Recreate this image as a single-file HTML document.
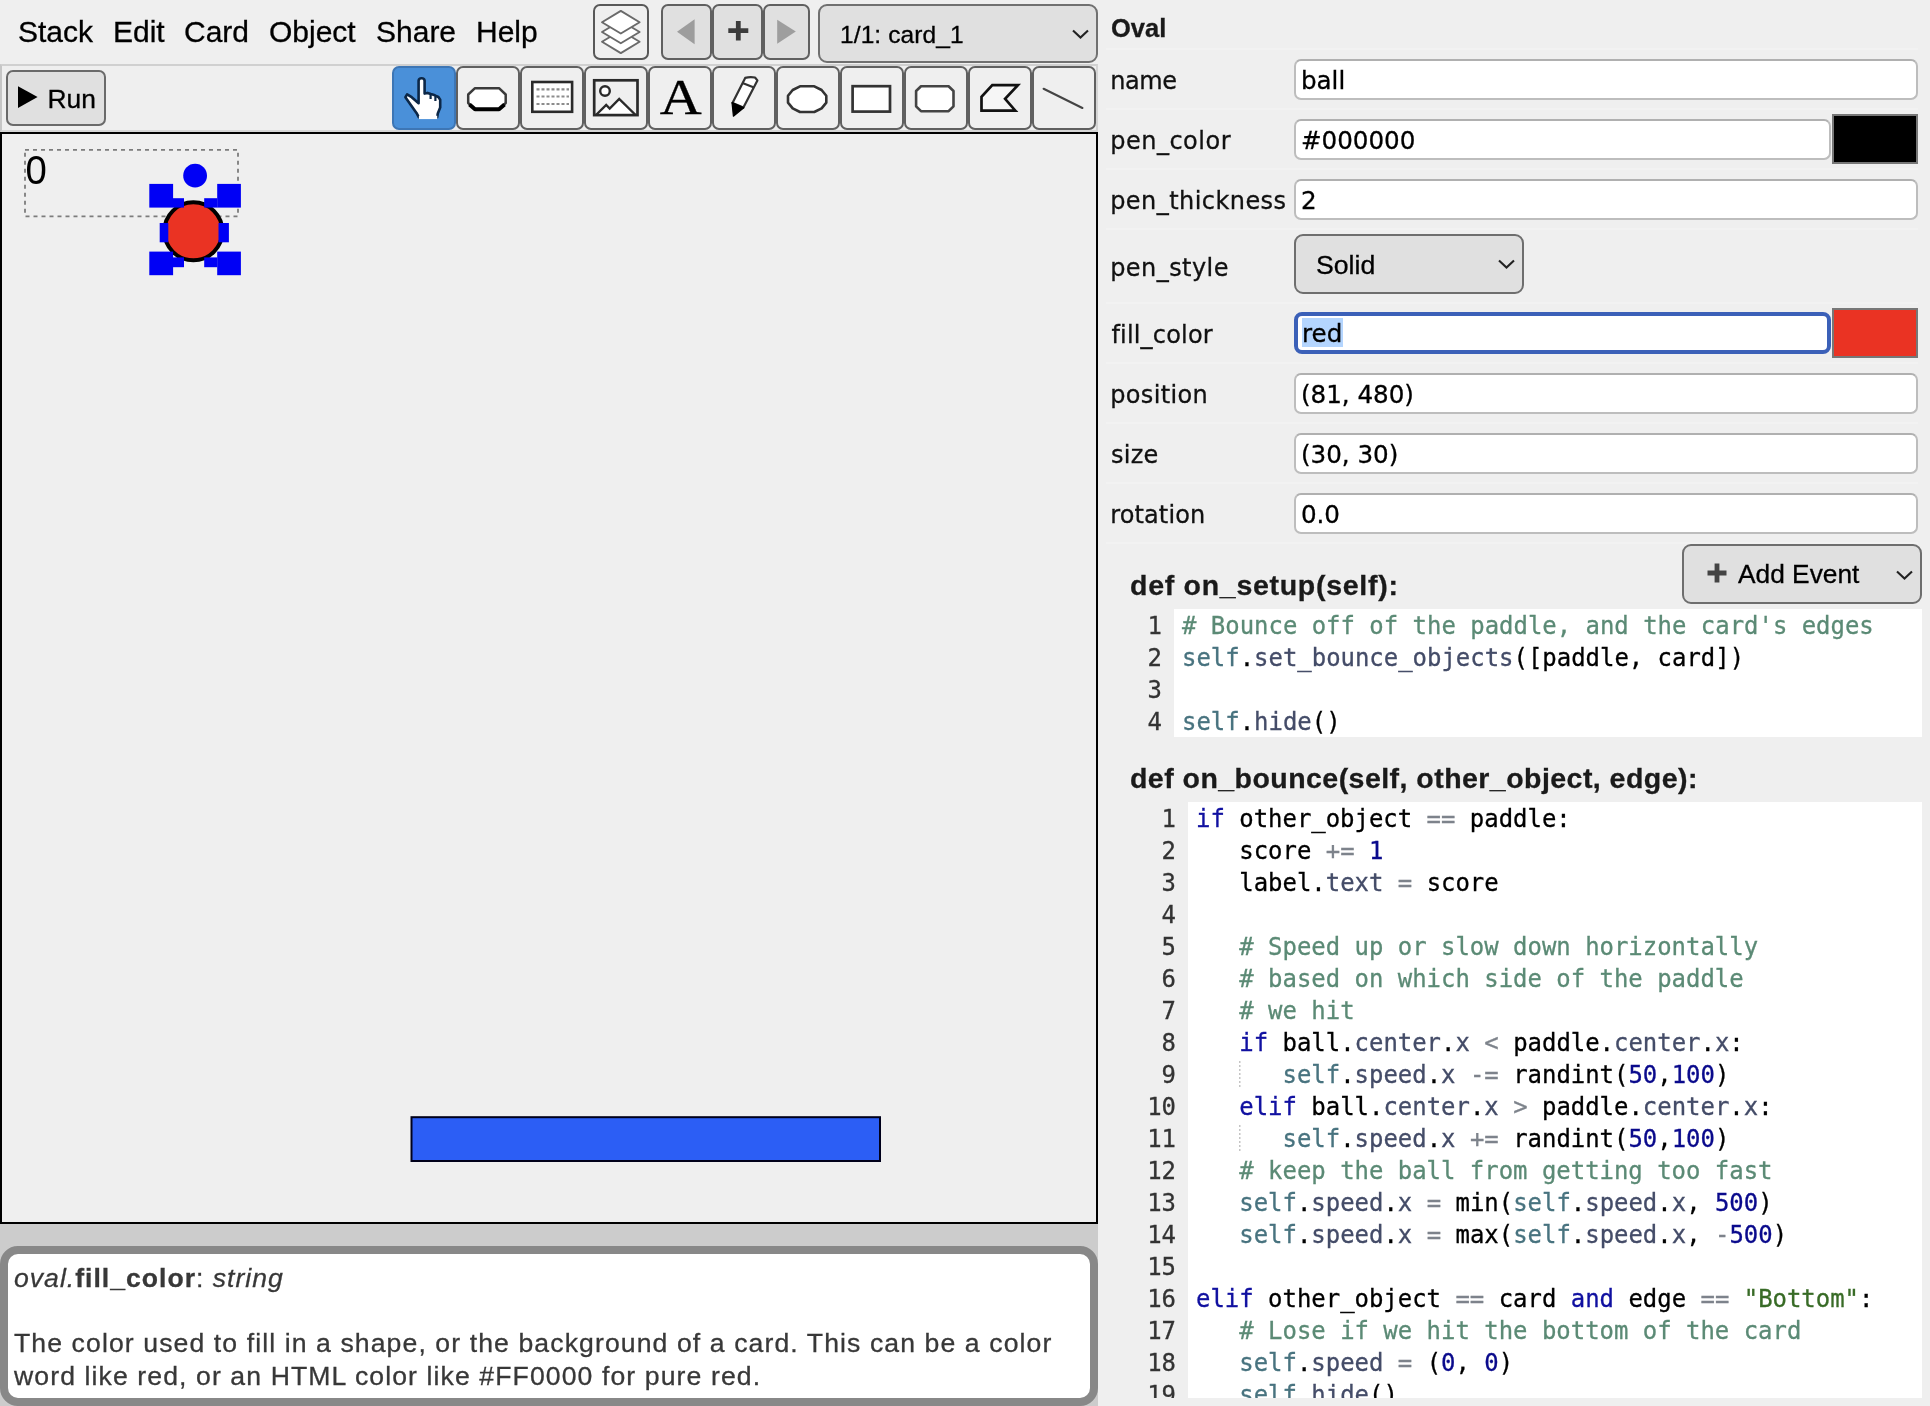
<!DOCTYPE html>
<html lang="en">
<head>
<meta charset="utf-8">
<title>CardStock</title>
<style>
*{box-sizing:border-box;margin:0;padding:0}
html,body{width:1930px;height:1406px;overflow:hidden;background:#efefef}
body{will-change:transform;-webkit-text-stroke-width:0.3px;position:relative;font-family:"Liberation Sans",sans-serif;color:#000}
.abs{position:absolute}
/* left column */
#menubar{position:absolute;left:0;top:0;width:1098px;height:64px;background:#efefef}
.mi{position:absolute;top:15px;font-size:30px;line-height:34px;white-space:nowrap}
#toolbar{position:absolute;left:0;top:64px;width:1098px;height:68px;background:#efefef;border:2px solid;border-color:#d0d0d0 #d4d4d4 #d6d6d6 #c6c6c6}
.btn{position:absolute;border:2px solid #606060;border-radius:7px;background:#e0e0e0}
.tool{position:absolute;top:66px;width:64px;height:64px;border:2px solid #606060;border-radius:7px;background:#efefef}
.tool svg{position:absolute;left:0;top:0;width:60px;height:60px}
#canvas{position:absolute;left:0;top:132px;width:1098px;height:1092px;border:2px solid #000;background:#efefef}
#below{position:absolute;left:0;top:1224px;width:1098px;height:182px;background:#cccccc}
#help{position:absolute;left:0;top:1246px;width:1098px;height:160px;border:8px solid #888;border-radius:18px;background:#fff;color:#383838;font-size:26.6px;line-height:33.2px;letter-spacing:1.1px}
/* right column */
#panel{position:absolute;left:1098px;top:0;width:832px;height:1406px;background:#efefef}
.lbl{position:absolute;left:1110px;font-family:"DejaVu Sans","Liberation Sans",sans-serif;font-size:24px;line-height:30px;white-space:nowrap;color:#111}
.inp{position:absolute;left:1294px;width:624px;height:41px;border:2px solid #bdbdbd;border-top-color:#b0b0b0;border-radius:7px;background:#fff;font-family:"DejaVu Sans","Liberation Sans",sans-serif;font-size:24.6px;line-height:39.2px;padding-left:4.9px;white-space:nowrap;color:#000}
.sel{position:absolute;border:2px solid #6e6e6e;border-radius:9px;background:#e0e0e0;font-size:26.67px;white-space:nowrap}
.sw{position:absolute;left:1832px;width:86px;height:50px;border:2px solid #777}
.hd{position:absolute;left:1130px;font-weight:bold;font-size:28.5px;line-height:34px;white-space:nowrap;color:#1a1a1a}
.ed{position:absolute;left:1110px;width:812px;background:#fff;overflow:hidden}
.gut{position:absolute;left:0;top:0;bottom:0;background:#efefef}
.code,.nums{position:absolute;top:0.5px;font-family:"DejaVu Sans Mono","Liberation Mono",monospace;font-size:23.95px;line-height:32px;white-space:pre}
.nums{text-align:right;color:#333}
.ig{background:repeating-linear-gradient(to bottom,#c4c4c4 0,#c4c4c4 2px,transparent 2px,transparent 4px) -0.5px 0/2px 100% no-repeat}
.c{color:#5b8a75}.k{color:#1010a0}.n{color:#0a0a8c}.s{color:#386b26}.v{color:#48737f}.f{color:#444c68}.o{color:#7d838b}
</style>
</head>
<body>
<div id="menubar">
<span class="mi" style="left:18px">Stack</span>
<span class="mi" style="left:113px">Edit</span>
<span class="mi" style="left:184px">Card</span>
<span class="mi" style="left:269px">Object</span>
<span class="mi" style="left:376px">Share</span>
<span class="mi" style="left:476px">Help</span>
</div>
<div id="toolbar"></div>

<!-- top-right controls -->
<div class="btn" style="left:593px;top:4px;width:56px;height:56px;background:#efefef;border-color:#585858">
<svg width="52" height="52" viewBox="2 2 52 52" style="position:absolute;left:0;top:0">
<g fill="#fff" stroke="#6a6a6a" stroke-width="1.9" stroke-linejoin="round">
<path d="M9 37.8 L27.8 26.5 L46.6 37.8 L27.8 49.1 Z"/>
<path d="M9 28 L27.8 16.7 L46.6 28 L27.8 39.3 Z"/>
<path d="M9 18.2 L27.8 6.9 L46.6 18.2 L27.8 29.5 Z"/>
</g></svg></div>
<div class="btn" style="left:661px;top:4px;width:51px;height:56px"><svg width="47" height="52" viewBox="2 2 47 52" style="position:absolute;left:0;top:0"><path d="M16 27.7 L33.6 15.3 L33.6 40.2 Z" fill="#9d9d9d"/></svg></div>
<div class="btn" style="left:712px;top:4px;width:51px;height:56px"><svg width="47" height="52" viewBox="1 2 47 52" style="position:absolute;left:0;top:0"><path d="M15.3 26.7 H35.3 M25.3 16.9 V36.5" stroke="#3c3c3c" stroke-width="4.8" fill="none"/></svg></div>
<div class="btn" style="left:763px;top:4px;width:47px;height:56px"><svg width="43" height="52" viewBox="1 2 43 52" style="position:absolute;left:0;top:0"><path d="M13.2 15.7 L13.2 39.7 L31.8 27.5 Z" fill="#9e9e9e"/></svg></div>
<div class="sel" style="left:818px;top:4px;width:280px;height:59px;font-size:24.5px;line-height:55px;padding-left:20px;border-color:#707070;letter-spacing:0.1px"><span style="position:relative;top:1px">1/1: card_1</span>
<svg width="24" height="16" viewBox="0 0 24 16" style="position:absolute;left:249.2px;top:21.2px"><path d="M4 3.5 L11.5 10.5 L19 3.5" fill="none" stroke="#222" stroke-width="2.1"/></svg></div>

<!-- run button -->
<div class="btn" style="left:6px;top:70px;width:100px;height:56px;border-color:#6a6a6a"><svg width="24" height="28" viewBox="0 0 24 28" style="position:absolute;left:9.9px;top:13px"><path d="M0 1.3 L19.6 12.1 L0 23 Z" fill="#000"/></svg><span style="position:absolute;left:39.5px;top:10px;font-size:26.4px;line-height:34px">Run</span></div>

<!-- tools -->
<div class="tool" style="left:392px;background:#4a90d9;border-color:#3d76b5">
<svg viewBox="2 2 60 60"><path d="M26.9 51.3 L25 47.8 L19 39.3 L13.4 31.2 L15.1 28.3 L19.7 31.2 L26.6 37.2 L26.6 14.6 Q26.8 12.2 29.6 12.2 Q32.4 12.2 32.6 14.6 L32.6 27.6 L35.6 26.9 L38.8 28 L41.4 28.7 L44 30 L46.4 31 L48.2 33.8 L48.2 41.6 L45.8 47.4 L45.2 51.3 Z" fill="#fff" stroke="#0c2747" stroke-width="2.6" stroke-linejoin="round"/>
<path d="M26.9 51.4 H45.2" stroke="#fff" stroke-width="3.4"/>
<path d="M38.6 28.5 V33 M43.4 30.5 V35" stroke="#0c2747" stroke-width="2.2"/></svg></div>
<div class="tool" style="left:456px"><svg viewBox="1 2 60 60"><path d="M18 22.2 H42 L48.7 28.5 V37 L42 43.3 H18 L11.2 37 V28.5 Z" fill="#fff" stroke="#3a3a3a" stroke-width="2.5" stroke-linejoin="round"/><path d="M12.5 38.5 L18 43.3 H42 L47.5 38.5" fill="none" stroke="#000" stroke-width="4" stroke-linejoin="round"/></svg></div>
<div class="tool" style="left:520px"><svg viewBox="1 2 60 60"><rect x="11.3" y="16" width="39.8" height="29.8" fill="#fff" stroke="#2a2a2a" stroke-width="2.6"/><path d="M15.5 23.3 H48 M15.5 30.5 H48 M15.5 38 H48" stroke="#8c8c8c" stroke-width="2.2" stroke-dasharray="3 2"/></svg></div>
<div class="tool" style="left:584px"><svg viewBox="1 2 60 60"><path d="M11.5 48.8 L21.2 39 L24.7 42.5 L34.2 32.9 L50.2 48.8 Z" fill="#fff"/><rect x="9.2" y="14.3" width="43.3" height="34.8" fill="none" stroke="#2a2a2a" stroke-width="2.7"/><circle cx="20" cy="25" r="4.8" fill="#fff" stroke="#2a2a2a" stroke-width="2.4"/><path d="M11 49 L21.2 39 L24.7 42.5 L34.2 32.9 L50.6 49" fill="none" stroke="#2a2a2a" stroke-width="2.4" stroke-linejoin="miter"/></svg></div>
<div class="tool" style="left:648px"><span style="position:absolute;left:0;top:0;width:60px;height:60px;text-align:center;font-family:'Liberation Serif',serif;font-size:51px;line-height:60px;transform:translate(0.7px,-0.9px) scaleX(1.14);display:block;color:#000">A</span></div>
<div class="tool" style="left:712px"><svg viewBox="1 2 60 60"><path d="M19.5 37 L32.2 11.9 Q37 10.4 42 11.5 L44.4 14.4 L30.4 41.5 Z" fill="#fff" stroke="#333" stroke-width="2.2" stroke-linejoin="round"/><path d="M30.1 17.2 L41 21.6" stroke="#333" stroke-width="2.2"/><path d="M19 36.5 L30.8 41.7 L20.4 50.2 Z" fill="#000" stroke="#000" stroke-width="1.2" stroke-linejoin="round"/></svg></div>
<div class="tool" style="left:776px"><svg viewBox="1 2 60 60"><path d="M23 20.3 H37.3 L44.6 24 L49.3 29.8 V36.6 L44.6 42.4 L37.3 46 H23 L15.7 42.4 L11 36.6 V29.8 L15.7 24 Z" fill="#fff" stroke="#333" stroke-width="2.6" stroke-linejoin="round"/></svg></div>
<div class="tool" style="left:840px"><svg viewBox="1 2 60 60"><rect x="11.6" y="20.2" width="37.4" height="25.4" fill="#fff" stroke="#333" stroke-width="2.7"/></svg></div>
<div class="tool" style="left:904px"><svg viewBox="1 2 60 60"><path d="M16 20.2 H43.6 L48.5 25 V40.3 L43.6 45.2 H16 L11.1 40.3 V25 Z" fill="#fff" stroke="#444" stroke-width="2.6" stroke-linejoin="round"/></svg></div>
<div class="tool" style="left:968px"><svg viewBox="1 2 60 60"><path d="M23.3 19.2 H48.9 L36.1 32.9 L46.4 44.7 H12.5 V30.8 Z" fill="#f6f6f6" stroke="#111" stroke-width="2.7" stroke-linejoin="miter"/></svg></div>
<div class="tool" style="left:1032px"><svg viewBox="1 2 60 60"><path d="M10.6 22.8 L49.4 42" stroke="#444" stroke-width="2.1" stroke-linecap="round"/></svg></div>
<div id="canvas">
<svg width="1094" height="1088" viewBox="2 134 1094 1088" style="position:absolute;left:0;top:0">
<rect x="25" y="149.8" width="213" height="66.5" fill="none" stroke="#7c7c7c" stroke-width="1.8" stroke-dasharray="4 4"/>
<text transform="translate(25.4 183.7) scale(0.93 1)" font-family="Liberation Sans, sans-serif" font-size="41.2" fill="#000">0</text>
<circle cx="193.35" cy="231.35" r="29" fill="#ea3323" stroke="#000" stroke-width="4"/>
<g fill="#0000f5">
<circle cx="195.1" cy="175.7" r="11.9"/>
<rect x="149.3" y="183.9" width="23.8" height="23.7"/>
<rect x="173" y="198.2" width="11" height="9.4"/>
<rect x="217.2" y="183.9" width="23.7" height="23.7"/>
<rect x="204.2" y="198.2" width="13.1" height="9.4"/>
<rect x="149.3" y="251.6" width="23.8" height="23.6"/>
<rect x="173" y="257.4" width="11" height="9.8"/>
<rect x="217.2" y="251.6" width="23.7" height="23.6"/>
<rect x="204.2" y="257.4" width="13.1" height="9.8"/>
<rect x="159.7" y="223" width="8.6" height="19.3"/>
<rect x="218.5" y="223" width="10.4" height="19.3"/>
</g>
<rect x="411.5" y="1117.2" width="468.5" height="43.8" fill="#2c5ef5" stroke="#00001a" stroke-width="2"/>
</svg>
</div>
<div id="below"></div>
<div id="help"><div style="position:absolute;left:6px;top:7.5px;white-space:nowrap;letter-spacing:1px"><i>oval.</i><b>fill_color</b>: <i>string</i></div>
<div style="position:absolute;left:6px;top:73.2px;white-space:nowrap">The color used to fill in a shape, or the background of a card. This can be a color<br>word like red, or an HTML color like #FF0000 for pure red.</div></div>
<div id="panel"></div>
<div class="abs" style="left:1111px;top:12px;font-weight:bold;font-size:25.5px;line-height:32px;color:#1a1a1a">Oval</div>
<div class="abs" style="left:1106px;top:48px;width:812px;height:2px;background:#f2f2f2"></div>
<div class="abs" style="left:1106px;top:108px;width:812px;height:2px;background:#f2f2f2"></div>
<div class="abs" style="left:1106px;top:168px;width:812px;height:2px;background:#f2f2f2"></div>
<div class="abs" style="left:1106px;top:228px;width:812px;height:2px;background:#f2f2f2"></div>
<div class="abs" style="left:1106px;top:302px;width:812px;height:2px;background:#f2f2f2"></div>
<div class="abs" style="left:1106px;top:362px;width:812px;height:2px;background:#f2f2f2"></div>
<div class="abs" style="left:1106px;top:422px;width:812px;height:2px;background:#f2f2f2"></div>
<div class="abs" style="left:1106px;top:482px;width:812px;height:2px;background:#f2f2f2"></div>
<div class="abs" style="left:1106px;top:542px;width:812px;height:2px;background:#f2f2f2"></div>
<div class="lbl" style="top:65.6px;left:1110.2px;letter-spacing:-0.4px">name</div>
<div class="inp" style="top:58.5px;">ball</div>
<div class="lbl" style="top:125.6px;left:1110.2px;letter-spacing:0.5px">pen_color</div>
<div class="inp" style="top:118.5px;width:537px">#000000</div>
<div class="sw" style="top:114px;background:#000"></div>
<div class="lbl" style="top:185.6px;left:1110.2px;letter-spacing:0.44px">pen_thickness</div>
<div class="inp" style="top:178.5px;">2</div>
<div class="lbl" style="top:252.6px;left:1110.2px;letter-spacing:0.44px">pen_style</div>
<div class="sel" style="left:1294px;top:234px;width:230px;height:59.5px;line-height:55px;padding-left:20px"><span style="position:relative;top:1.5px">Solid</span>
<svg width="24" height="16" viewBox="0 0 24 16" style="position:absolute;left:199.2px;top:21.2px"><path d="M4 3.5 L11.5 10.5 L19 3.5" fill="none" stroke="#222" stroke-width="2.1"/></svg></div>
<div class="lbl" style="top:319.6px;left:1111.4px;letter-spacing:0.19px">fill_color</div>
<div class="inp" style="top:312px;width:537px;height:41.5px;border:4px solid #3b60b8;border-radius:8px;padding-left:4px;line-height:33px"><span style="background:#b4d5fe;display:inline-block;height:29px;line-height:32.5px;padding:0 1px 0 0;position:relative;top:1px">red</span></div>
<div class="sw" style="top:308px;background:#ea3323"></div>
<div class="lbl" style="top:379.6px;left:1110.2px;letter-spacing:0.34px">position</div>
<div class="inp" style="top:372.5px;">(81, 480)</div>
<div class="lbl" style="top:439.6px;left:1111.0px;letter-spacing:0.24px">size</div>
<div class="inp" style="top:432.5px;">(30, 30)</div>
<div class="lbl" style="top:499.6px;left:1110.2px;letter-spacing:0.13px">rotation</div>
<div class="inp" style="top:492.5px;">0.0</div>
<div class="sel" style="left:1682px;top:544px;width:240px;height:59.5px;line-height:55px"><svg width="22" height="22" viewBox="0 0 22 22" style="position:absolute;left:22.3px;top:16.2px"><path d="M1.5 11 H20.5 M11 1.5 V20.5" stroke="#444" stroke-width="4.8" fill="none"/></svg><span style="position:absolute;left:54px;top:1.2px;font-size:26.3px">Add Event</span>
<svg width="24" height="16" viewBox="0 0 24 16" style="position:absolute;left:209.4px;top:22.1px"><path d="M4 3.5 L11.5 10.5 L19 3.5" fill="none" stroke="#222" stroke-width="2.1"/></svg></div>
<div class="hd" style="top:568.3px;letter-spacing:0.72px">def on_setup(self):</div>
<div class="hd" style="top:761.3px;letter-spacing:0.46px">def on_bounce(self, other_object, edge):</div>
<div class="ed" style="top:609px;height:128px"><div class="gut" style="width:64px"></div><div class="nums" style="left:0;width:52px">1
2
3
4</div><div class="code" style="left:72px"><span class="c"># Bounce off of the paddle, and the card's edges</span>
<span class="v">self</span>.<span class="f">set_bounce_objects</span>([paddle, card])

<span class="v">self</span>.<span class="f">hide</span>()</div></div>
<div class="ed" style="top:802px;height:596px"><div class="gut" style="width:78px"></div><div class="nums" style="left:0;width:66px">1
2
3
4
5
6
7
8
9
10
11
12
13
14
15
16
17
18
19</div><div class="code" style="left:86px"><span class="k">if</span> other_object <span class="o">==</span> paddle:
   score <span class="o">+=</span> <span class="n">1</span>
   label.<span class="f">text</span> <span class="o">=</span> score

   <span class="c"># Speed up or slow down horizontally</span>
   <span class="c"># based on which side of the paddle</span>
   <span class="c"># we hit</span>
   <span class="k">if</span> ball.<span class="f">center</span>.<span class="f">x</span> <span class="o">&lt;</span> paddle.<span class="f">center</span>.<span class="f">x</span>:
   <span class="ig">   </span><span class="v">self</span>.<span class="f">speed</span>.<span class="f">x</span> <span class="o">-=</span> randint(<span class="n">50</span>,<span class="n">100</span>)
   <span class="k">elif</span> ball.<span class="f">center</span>.<span class="f">x</span> <span class="o">&gt;</span> paddle.<span class="f">center</span>.<span class="f">x</span>:
   <span class="ig">   </span><span class="v">self</span>.<span class="f">speed</span>.<span class="f">x</span> <span class="o">+=</span> randint(<span class="n">50</span>,<span class="n">100</span>)
   <span class="c"># keep the ball from getting too fast</span>
   <span class="v">self</span>.<span class="f">speed</span>.<span class="f">x</span> <span class="o">=</span> min(<span class="v">self</span>.<span class="f">speed</span>.<span class="f">x</span>, <span class="n">500</span>)
   <span class="v">self</span>.<span class="f">speed</span>.<span class="f">x</span> <span class="o">=</span> max(<span class="v">self</span>.<span class="f">speed</span>.<span class="f">x</span>, <span class="o">-</span><span class="n">500</span>)

<span class="k">elif</span> other_object <span class="o">==</span> card <span class="k">and</span> edge <span class="o">==</span> <span class="s">"Bottom"</span>:
   <span class="c"># Lose if we hit the bottom of the card</span>
   <span class="v">self</span>.<span class="f">speed</span> <span class="o">=</span> (<span class="n">0</span>, <span class="n">0</span>)
   <span class="v">self</span>.<span class="f">hide</span>()</div></div>
</body>
</html>
